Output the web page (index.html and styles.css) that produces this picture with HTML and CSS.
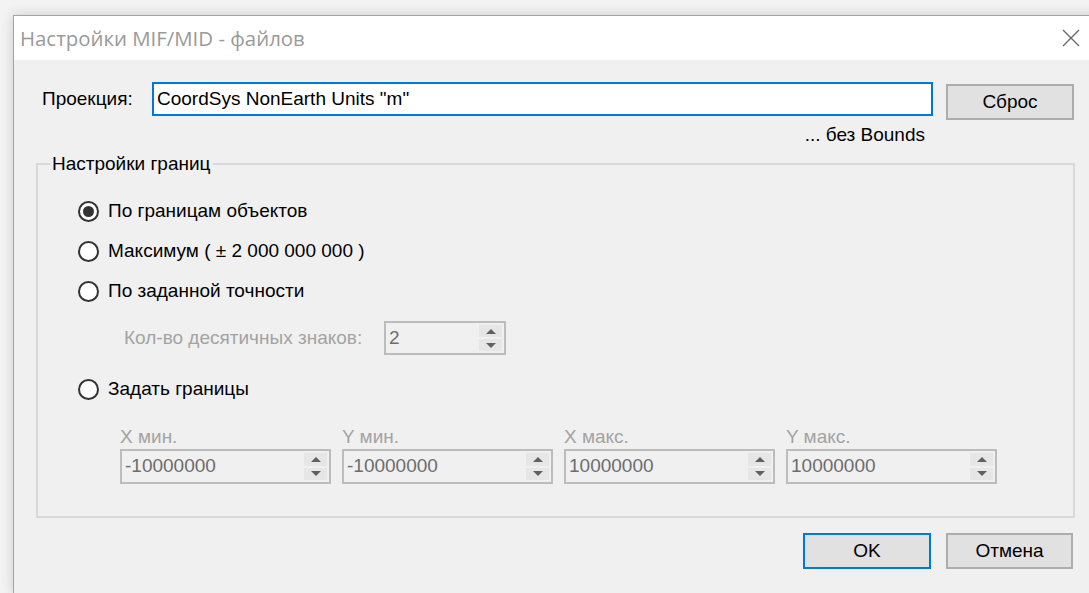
FILE: index.html
```html
<!DOCTYPE html>
<html lang="ru">
<head>
<meta charset="utf-8">
<title>Настройки MIF/MID - файлов</title>
<link rel="stylesheet" href="styles.css">
</head>
<body>
<div class="window">
  <div class="titlebar">
    <span class="title">Настройки MIF/MID - файлов</span>
    <svg class="close" width="18" height="18" viewBox="0 0 18 18" aria-hidden="true">
      <path d="M1 1 L17 17 M17 1 L1 17" stroke="#6a6a6a" stroke-width="1.4" fill="none"/>
    </svg>
  </div>
  <div class="content">
    <div class="proj-row">
      <span class="proj-label">Проекция:</span>
      <div class="proj-input">CoordSys NonEarth Units "m"</div>
      <button class="btn btn-reset">Сброс</button>
    </div>
    <div class="hint">... без Bounds</div>

    <fieldset class="group">
      <legend class="group-title">Настройки границ</legend>

      <div class="radio-row"><span class="radio checked"></span><span>По границам объектов</span></div>
      <div class="radio-row"><span class="radio"></span><span>Максимум ( ± 2 000 000 000 )</span></div>
      <div class="radio-row"><span class="radio"></span><span>По заданной точности</span></div>

      <div class="decimals">
        <span class="dis decimals-label">Кол-во десятичных знаков:</span>
        <div class="spin spin-small">
          <span class="spin-value">2</span>
          <span class="spin-arrows"><span class="arr up"></span><span class="arr down"></span></span>
        </div>
      </div>

      <div class="radio-row"><span class="radio"></span><span>Задать границы</span></div>

      <div class="coords">
        <div class="coord">
          <span class="dis coord-label">X мин.</span>
          <div class="spin"><span class="spin-value">-10000000</span><span class="spin-arrows"><span class="arr up"></span><span class="arr down"></span></span></div>
        </div>
        <div class="coord">
          <span class="dis coord-label">Y мин.</span>
          <div class="spin"><span class="spin-value">-10000000</span><span class="spin-arrows"><span class="arr up"></span><span class="arr down"></span></span></div>
        </div>
        <div class="coord">
          <span class="dis coord-label">X макс.</span>
          <div class="spin"><span class="spin-value">10000000</span><span class="spin-arrows"><span class="arr up"></span><span class="arr down"></span></span></div>
        </div>
        <div class="coord">
          <span class="dis coord-label">Y макс.</span>
          <div class="spin"><span class="spin-value">10000000</span><span class="spin-arrows"><span class="arr up"></span><span class="arr down"></span></span></div>
        </div>
      </div>
    </fieldset>

    <div class="buttons">
      <button class="btn btn-default">OK</button>
      <button class="btn btn-cancel">Отмена</button>
    </div>
  </div>
</div>
</body>
</html>
```

FILE: styles.css
```css
html, body {
  margin: 0;
  padding: 0;
}

body {
  background: #f3f3f3;
  overflow: hidden;
  height: 593px;
  font-family: "Liberation Sans", Arial, sans-serif;
  font-size: 19px;
  color: #000;
}

/* dialog frame; it continues past the right and bottom edges */
.window {
  margin: 15px 0 0 13px;
  width: 1120px;
  height: 577px;
  border: 1px solid #a3a3a3;
  border-bottom: 0;
  background: #f0f0f0;
  box-shadow: 0 0 12px rgba(0, 0, 0, 0.16);
}

.titlebar {
  height: 44px;
  background: #fff;
  display: flex;
  align-items: center;
  justify-content: space-between;
  padding: 0 54px 0 6px;
}

.title {
  font-family: "Open Sans", "Noto Sans", sans-serif;
  font-size: 20.4px;
  color: #9a9a9a;
}

.close {
  display: block;
}

.content {
  padding: 22px 59px 0 22px;
}

/* projection row */
.proj-row {
  display: flex;
  align-items: flex-start;
}

.proj-label {
  width: 116px;
  padding-left: 6px;
  box-sizing: border-box;
  line-height: 34px;
}

.proj-input {
  width: 781px;
  height: 34px;
  box-sizing: border-box;
  border: 2px solid #0078d7;
  background: #fff;
  padding-left: 3px;
  line-height: 30px;
  white-space: nowrap;
}

.btn {
  font-family: "Liberation Sans", Arial, sans-serif;
  font-size: 19px;
  color: #000;
  height: 36px;
  width: 128px;
  box-sizing: border-box;
  border: 2px solid #adadad;
  background: #e1e1e1;
  padding: 0;
  margin: 0;
}

.btn-reset {
  margin-left: 13px;
  margin-top: 2px;
}

.hint {
  margin-top: 5px;
  line-height: 20px;
  text-align: right;
  padding-right: 150px;
}

/* bounds group */
.group {
  margin: 9px 0 0 0;
  padding: 17px 0 32px 0;
  border: 2px solid #d9d9d9;
  min-width: 0;
}

.group-title {
  margin-left: 12px;
  padding: 0 2px;
  line-height: 20px;
}

.radio-row {
  height: 40px;
  display: flex;
  align-items: center;
  padding-left: 40px;
}

.radio {
  width: 21px;
  height: 21px;
  box-sizing: border-box;
  border: 2px solid #333;
  border-radius: 50%;
  background: #fff;
  margin-right: 9px;
  display: flex;
  align-items: center;
  justify-content: center;
  flex: none;
}

.radio.checked::after {
  content: "";
  width: 11px;
  height: 11px;
  border-radius: 50%;
  background: #333;
}

.dis {
  color: #a3a3a3;
}

.decimals {
  display: flex;
  align-items: center;
  margin: 10px 0 14px 0;
  padding-left: 86px;
}

.decimals-label {
  width: 260px;
  line-height: 34px;
}

.spin {
  display: flex;
  height: 35px;
  box-sizing: border-box;
  border: 2px solid #bcbcbc;
  background: #f0f0f0;
}

.spin-small {
  width: 122px;
  height: 34px;
}

.spin-value {
  flex: 1;
  padding-left: 3px;
  color: #6d6d6d;
  line-height: 30px;
}

.spin-arrows {
  width: 23px;
  display: flex;
  flex-direction: column;
  gap: 2px;
  padding: 2px 2px 2px 0;
}

.arr {
  flex: 1;
  background: #e6e6e6;
  display: flex;
  align-items: center;
  justify-content: center;
}

.arr::after {
  content: "";
  width: 0;
  height: 0;
  border-left: 5px solid transparent;
  border-right: 5px solid transparent;
}

.arr.up::after {
  border-bottom: 5px solid #606060;
}

.arr.down::after {
  border-top: 5px solid #606060;
}

.coords {
  display: flex;
  gap: 11px;
  padding-left: 82px;
  margin-top: 18px;
}

.coord {
  width: 211px;
  display: flex;
  flex-direction: column;
}

.coord-label {
  line-height: 20px;
  margin-bottom: 2px;
}

/* dialog buttons */
.buttons {
  display: flex;
  justify-content: flex-end;
  gap: 15px;
  margin-top: 15px;
  padding-right: 2px;
}

.btn-default {
  border-color: #0078d7;
}

.btn-cancel {
  width: 127px;
}
```
